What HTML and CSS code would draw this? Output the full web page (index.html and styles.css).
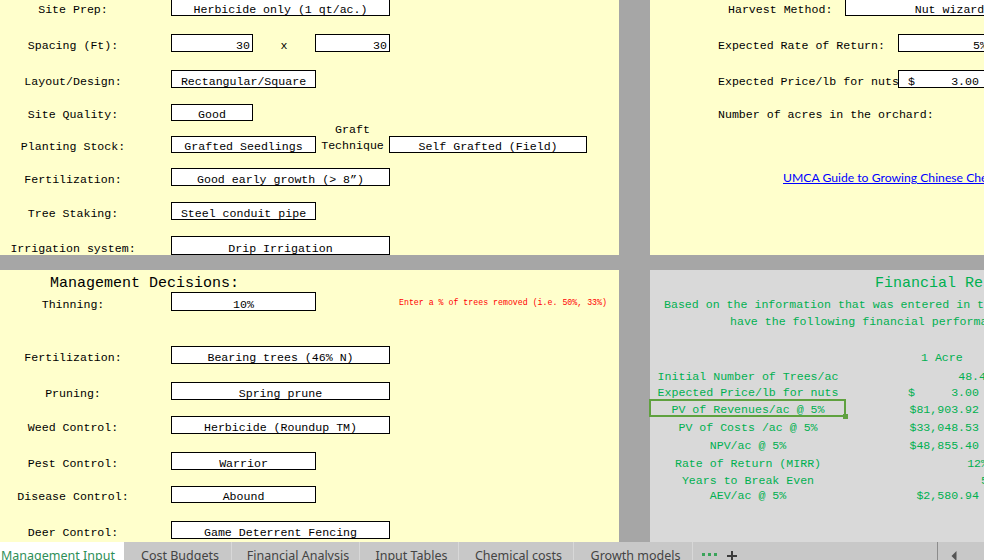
FILE: index.html
```html
<!DOCTYPE html>
<html lang="en">
<head>
<meta charset="utf-8">
<title>Management Input</title>
<link rel="stylesheet" href="styles.css">
</head>
<body>
<main class="sheet">
  <section class="panel yellow tl">
    <div class="row first"><span class="lbl">Site Prep:</span><span class="box w219">Herbicide only (1 qt/ac.)</span></div>
    <div class="row mt18"><span class="lbl">Spacing (Ft):</span><span class="box w82 num">30</span><span class="cell wx">x</span><span class="box w75 num">30</span></div>
    <div class="row mt18"><span class="lbl">Layout/Design:</span><span class="box w145">Rectangular/Square</span></div>
    <div class="row short mt16"><span class="lbl">Site Quality:</span><span class="box w82">Good</span></div>
    <div class="row short mt15"><span class="lbl">Planting Stock:</span><span class="box w145">Grafted Seedlings</span><span class="graft"><span>Graft</span><span>Technique</span></span><span class="box w198">Self Grafted (Field)</span></div>
    <div class="row mt15"><span class="lbl">Fertilization:</span><span class="box w219">Good early growth (&gt; 8”)</span></div>
    <div class="row mt16"><span class="lbl">Tree Staking:</span><span class="box w145">Steel conduit pipe</span></div>
    <div class="row tall mt16"><span class="lbl">Irrigation system:</span><span class="box w219">Drip Irrigation</span></div>
  </section>

  <section class="panel yellow tr">
    <div class="row first"><span class="lbl-l w195 pl77">Harvest Method:</span><span class="box w209">Nut wizard</span></div>
    <div class="row mt18"><span class="lbl-l w248 pl67">Expected Rate of Return:</span><span class="box w92 num">5%</span></div>
    <div class="row mt18"><span class="lbl-l w248 pl67">Expected Price/lb for nuts</span><span class="box w102 acct"><span>$</span><span>3.00</span></span></div>
    <div class="row short mt16"><span class="lbl-l pl67">Number of acres in the orchard:</span></div>
    <a class="link" href="#">UMCA Guide to Growing Chinese Chestnuts</a>
  </section>

  <section class="panel yellow bl">
    <div class="title">Management Decisions:</div>
    <div class="row tall"><span class="lbl">Thinning:</span><span class="box w145">10%</span><span class="note">Enter a % of trees removed (i.e. 50%, 33%)</span></div>
    <div class="row mt35"><span class="lbl">Fertilization:</span><span class="box w219">Bearing trees (46% N)</span></div>
    <div class="row mt18"><span class="lbl">Pruning:</span><span class="box w219">Spring prune</span></div>
    <div class="row mt16"><span class="lbl">Weed Control:</span><span class="box w219">Herbicide (Roundup TM)</span></div>
    <div class="row mt18"><span class="lbl">Pest Control:</span><span class="box w145">Warrior</span></div>
    <div class="row short mt16"><span class="lbl">Disease Control:</span><span class="box w145">Abound</span></div>
    <div class="row mt18"><span class="lbl">Deer Control:</span><span class="box w219">Game Deterrent Fencing</span></div>
  </section>

  <section class="panel fin">
    <div class="fin-title">Financial Results</div>
    <div class="intro">
      <div class="i1">Based on the information that was entered in the model, you</div>
      <div class="i2">have the following financial performance:</div>
    </div>
    <div class="acre">1 Acre</div>
    <div class="frows">
      <div class="frow h16"><span class="flbl">Initial Number of Trees/ac</span><span class="fval pr7">48.40</span></div>
      <div class="frow h17"><span class="flbl">Expected Price/lb for nuts</span><span class="fval acct2"><span>$</span><span>3.00</span></span></div>
      <div class="frow h18"><span class="flbl">PV of Revenues/ac @ 5%<span class="selbox"></span></span><span class="fval">$81,903.92</span></div>
      <div class="frow h18"><span class="flbl">PV of Costs /ac @ 5%</span><span class="fval">$33,048.53</span></div>
      <div class="frow h18"><span class="flbl">NPV/ac @ 5%</span><span class="fval">$48,855.40</span></div>
      <div class="frow h17"><span class="flbl">Rate of Return (MIRR)</span><span class="fval pr12">12%</span></div>
      <div class="frow h15"><span class="flbl">Years to Break Even</span><span class="fval pr12">5</span></div>
      <div class="frow h17"><span class="flbl">AEV/ac @ 5%</span><span class="fval">$2,580.94</span></div>
    </div>
  </section>
</main>

<nav class="tabs">
  <span class="tab active">Management Input</span>
  <span class="tab t108">Cost Budgets</span>
  <span class="tab t128">Financial Analysis</span>
  <span class="tab t99">Input Tables</span>
  <span class="tab t115">Chemical costs</span>
  <span class="tab t119">Growth models</span>
  <div class="tools">
    <span class="dots"><i></i><i></i><i></i></span>
    <svg class="plus" width="10" height="10" viewBox="0 0 10 10"><path d="M5 0V10M0 5H10" stroke="#3c3c3c" stroke-width="2"/></svg>
  </div>
  <svg class="prev" width="6" height="10" viewBox="0 0 6 10"><path d="M5.5 0L0.5 5L5.5 10Z" fill="#555"/></svg>
</nav>
</body>
</html>
```

FILE: styles.css
```css
* { box-sizing: border-box; }

html, body {
  margin: 0;
  padding: 0;
  overflow: hidden;
}

body {
  width: 984px;
  height: 560px;
  background: #a6a6a6;
  font-family: "Liberation Mono", "DejaVu Sans Mono", monospace;
  font-size: 11.6px;
  color: #000;
}

.sheet {
  display: grid;
  grid-template-columns: 619px 336px;
  grid-template-rows: 255px 272px;
  column-gap: 31px;
  row-gap: 15px;
  width: 986px;
  height: 542px;
}

.panel { min-width: 0; }
.yellow { background: #ffffcc; }
.tl, .tr { overflow: hidden; }

/* spreadsheet rows */
.row {
  display: flex;
  align-items: flex-end;
  height: 18px;
  white-space: nowrap;
}
.row.short { height: 17px; }
.row.tall { height: 19px; }

.row > * {
  flex: none;
  height: 100%;
  border: 1px solid transparent;
  padding-top: 4px;
  line-height: 13px;
}
.row.short > * { padding-top: 3px; }
.row.tall > * { padding-top: 5px; }

.first { margin-top: -2px; }
.mt15 { margin-top: 15px; }
.mt16 { margin-top: 16px; }
.mt18 { margin-top: 18px; }
.mt35 { margin-top: 35px; }

.lbl {
  width: 171px;
  padding-right: 25px;
  text-align: center;
}
.lbl-l { text-align: left; }
.pl67 { padding-left: 67px; }
.pl77 { padding-left: 77px; }
.w195 { width: 195px; }
.w248 { width: 248px; }

.box {
  border-color: #000;
  background: #fff;
  text-align: center;
  overflow: hidden;
}
.box.num { text-align: right; padding-right: 2px; }
.box.acct {
  display: flex;
  justify-content: space-between;
  padding-left: 9px;
  padding-right: 20px;
}

.w75 { width: 75px; }
.w82 { width: 82px; }
.w92 { width: 92px; }
.w102 { width: 102px; }
.w145 { width: 145px; }
.w198 { width: 198px; }
.w209 { width: 209px; }
.w219 { width: 219px; }

.cell.wx { width: 62px; text-align: center; }

.row.short > .graft,
.row > .graft {
  height: auto;
  border: 0;
  padding: 0 0 1px;
  width: 73px;
  display: flex;
  flex-direction: column;
  align-items: center;
  line-height: 13px;
}
.graft span:first-child { margin-bottom: 3px; }

.row.tall > .note {
  height: auto;
  border: 0;
  padding: 0 0 3px;
  margin-left: 83px;
  font-size: 8.25px;
  line-height: 10px;
  color: #f00;
}

.link {
  display: block;
  width: max-content;
  margin-top: 49px;
  margin-left: 133px;
  font-family: Lato, "Liberation Sans", sans-serif;
  font-size: 12.2px;
  line-height: 16px;
  color: #0000ff;
  text-decoration: underline;
  white-space: nowrap;
}

/* bottom-left */
.title {
  height: 22px;
  padding: 5px 0 0 50px;
  font-size: 15px;
  line-height: 17px;
  white-space: nowrap;
}

/* financial results */
.fin {
  background: #d9d9d9;
  color: #00b050;
  white-space: nowrap;
}
.fin-title {
  height: 22px;
  padding: 5px 0 0 225px;
  font-size: 15px;
  line-height: 17px;
}
.intro { margin-top: 4px; line-height: 17px; }
.i1 { padding-left: 14px; }
.i2 { padding-left: 80px; }
.acre { margin-top: 19px; line-height: 17px; padding-left: 271px; }

.frows { margin-top: 2px; }
.frow { display: flex; line-height: 17px; }
.h15 { height: 15px; }
.h16 { height: 16px; }
.h17 { height: 17px; }
.h18 { height: 18px; }

.flbl {
  flex: none;
  width: 196px;
  text-align: center;
  position: relative;
}
.fval {
  flex: none;
  width: 154px;
  text-align: right;
  padding-right: 21px;
}
.fval.pr7 { padding-right: 7px; }
.fval.pr12 { padding-right: 12px; }
.fval.acct2 {
  display: flex;
  justify-content: space-between;
  padding-left: 62px;
}

.selbox {
  position: absolute;
  left: -1px;
  top: -2px;
  width: 197px;
  height: 18px;
  border: 2px solid #5fa13f;
}
.selbox::after {
  content: "";
  position: absolute;
  right: -4px;
  bottom: -4px;
  width: 5px;
  height: 5px;
  background: #5fa13f;
}

/* sheet tabs */
.tabs {
  display: flex;
  align-items: flex-start;
  height: 28px;
  background: #c8c8c8;
  font-family: "Noto Sans", "Open Sans", sans-serif;
  font-size: 12.5px;
  color: #444;
  white-space: nowrap;
}
.tab {
  flex: none;
  height: 28px;
  line-height: 28px;
  text-align: center;
  padding-left: 5px;
  border-right: 1px solid #d8d8d8;
}
.tab.active {
  width: 124px;
  background: #fff;
  color: #2f8f58;
  text-align: left;
  padding-left: 1px;
  border-right: 0;
}
.t108 { width: 108px; }
.t128 { width: 128px; }
.t99 { width: 99px; }
.t115 { width: 115px; }
.t119 { width: 119px; }

.tools {
  flex: none;
  display: flex;
  align-items: flex-start;
  width: 245px;
  height: 28px;
  border-right: 1px solid #8c8c8c;
}
.dots {
  display: flex;
  gap: 3px;
  margin: 11px 0 0 9px;
}
.dots i {
  display: block;
  width: 3px;
  height: 3px;
  background: #3aa35a;
}
.plus { margin: 9px 0 0 10px; }
.prev { flex: none; margin: 9px 0 0 13px; }
```
